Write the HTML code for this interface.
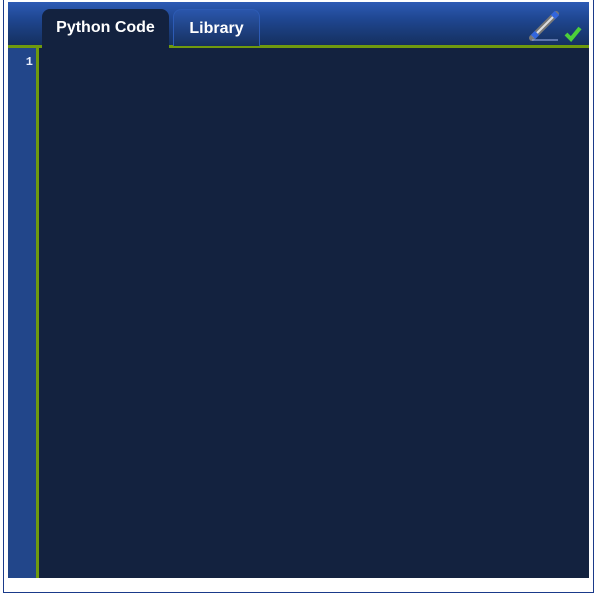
<!DOCTYPE html>
<html><head><style>
html,body{margin:0;padding:0;background:#fff;width:599px;height:598px;overflow:hidden;font-family:"Liberation Sans",sans-serif}
.outer{position:absolute;left:3px;top:-2px;width:589px;height:594px;border:1px solid #1a3a8a;border-top:none}
.hdr{position:absolute;left:8px;top:2px;width:581px;height:43px;background:linear-gradient(#2d5bb5,#1f4690 40%,#15305f)}
.gl{position:absolute;left:8px;top:45px;width:581px;height:3px;background:#6f9a0e}
.gut{position:absolute;left:8px;top:48px;width:28px;height:530px;background:#22468a}
.vl{position:absolute;left:36px;top:48px;width:3px;height:530px;background:#6f9a0e}
.ed{position:absolute;left:39px;top:48px;width:550px;height:530px;background:#13223f}
.ln{position:absolute;left:8px;top:55px;width:25px;text-align:right;color:#e8eefc;font:bold 12px "Liberation Mono",monospace}
.t1{position:absolute;z-index:2;left:42px;top:9px;width:127px;height:39px;background:#13223f;border-radius:8px 8px 0 0;color:#fff;font-weight:bold;font-size:16px;text-align:center;line-height:38px}
.t2{position:absolute;left:173px;top:9px;width:85px;height:36px;border:1px solid #2d5bb5;border-bottom:none;border-radius:8px 8px 0 0;background:linear-gradient(#2a56ab,#16305f);color:#fff;font-weight:bold;font-size:16px;text-align:center;line-height:37px;box-sizing:content-box}
</style></head><body>
<div class="outer"></div>
<div class="hdr"></div>
<div class="gl"></div>
<div class="gut"></div><div class="vl"></div><div class="ed"></div>
<div class="ln">1</div>
<div class="t1">Python Code</div>
<div class="t2">Library</div>
<svg style="position:absolute;left:528px;top:8px" width="56" height="36">
<line x1="4" y1="30" x2="28" y2="6" stroke="#777" stroke-width="6" stroke-linecap="round"/>
<line x1="5" y1="29" x2="27" y2="7" stroke="#ddd" stroke-width="2"/>
<line x1="25" y1="9" x2="29" y2="5" stroke="#3366dd" stroke-width="6"/>
<line x1="5" y1="29" x2="9" y2="25" stroke="#3366dd" stroke-width="6"/>
<line x1="4" y1="32" x2="30" y2="32" stroke="#8aa0d8" stroke-width="2" opacity=".6"/>
<path d="M38 26 L43 31 L52 20" stroke="#4ccf3a" stroke-width="4" fill="none"/>
</svg>
</body></html>
